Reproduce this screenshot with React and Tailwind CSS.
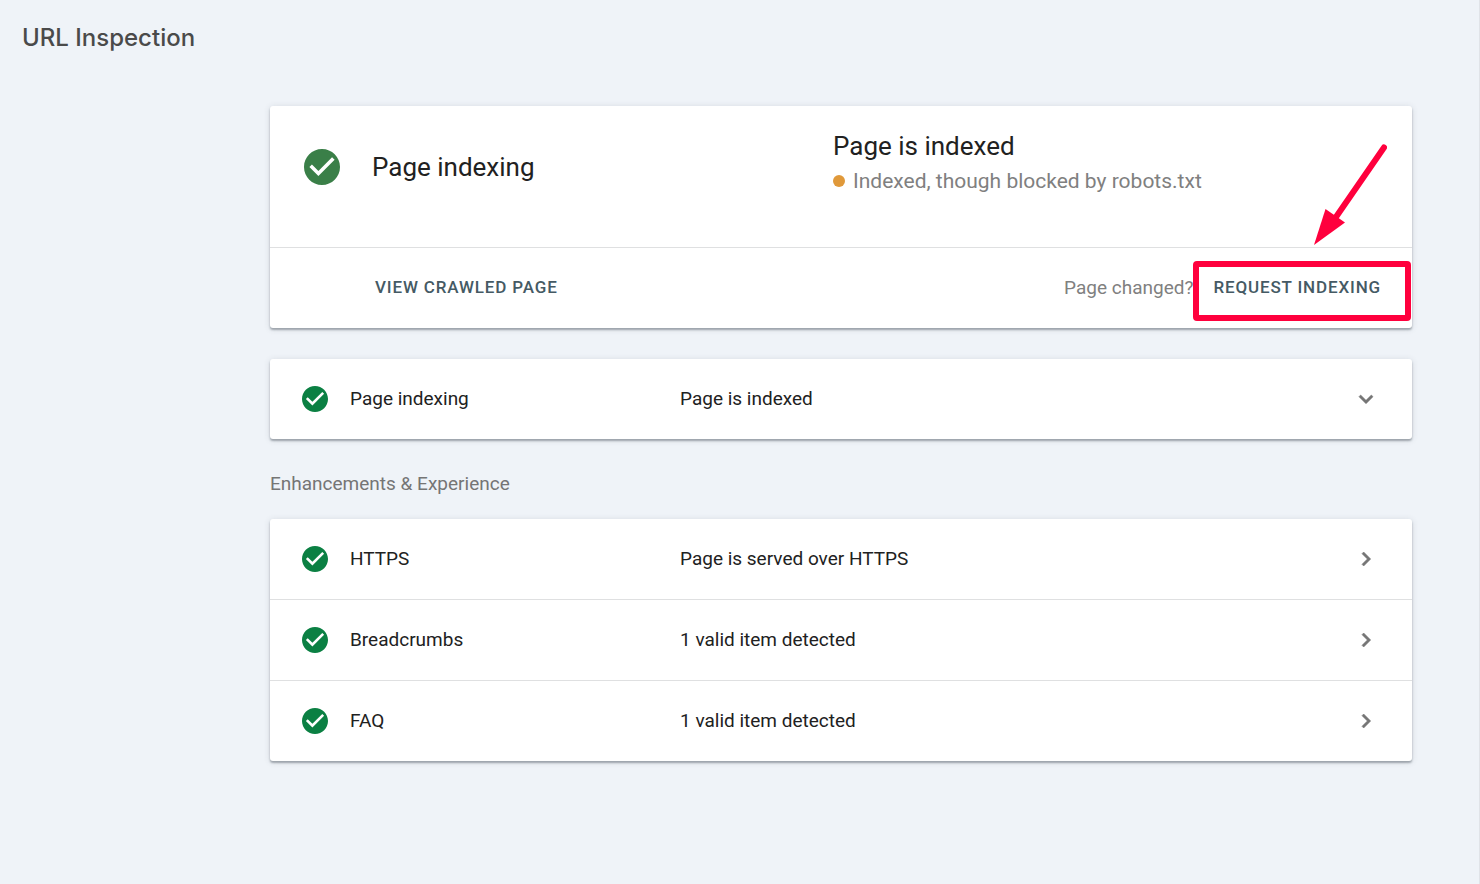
const ENHANCEMENTS = [
  { id: "https", label: "HTTPS", status: "Page is served over HTTPS" },
  { id: "breadcrumbs", label: "Breadcrumbs", status: "1 valid item detected" },
  { id: "faq", label: "FAQ", status: "1 valid item detected" },
];

function CheckIcon({ className }) {
  return (
    <svg viewBox="2 2 20 20" fill="currentColor" className={className} aria-hidden="true">
      <path d="M12 2C6.48 2 2 6.48 2 12s4.48 10 10 10 10-4.48 10-10S17.52 2 12 2zm-2 15l-5-5 1.41-1.41L10 14.17l7.59-7.59L19 8l-9 9z" />
    </svg>
  );
}

function ChevronIcon({ direction }) {
  return (
    <svg
      viewBox="0 0 24 24"
      fill="currentColor"
      stroke="currentColor"
      strokeWidth="0.5"
      className="size-7 text-[#757575]"
      aria-hidden="true"
    >
      {direction === "down" ? (
        <path d="M7.41 8.59L12 13.17l4.59-4.58L18 10l-6 6-6-6 1.41-1.41z" />
      ) : (
        <path d="M8.59 16.59L13.17 12 8.59 7.41 10 6l6 6-6 6-1.41-1.41z" />
      )}
    </svg>
  );
}

function Card({ children }) {
  return (
    <section className="rounded-[3px] bg-white shadow-[0_2px_2px_rgba(60,70,80,0.4),0_1px_6px_rgba(60,70,80,0.16)]">
      {children}
    </section>
  );
}

function StatusRow({ label, status, direction = "right" }) {
  return (
    <button type="button" className="flex h-20 w-full items-center px-8 text-left text-[19px] leading-6 text-[#212121]">
      <CheckIcon className="mr-[22px] size-[26px] shrink-0 text-[#0b8043]" />
      <span className="w-[330px] shrink-0">{label}</span>
      <span className="flex-1">{status}</span>
      <ChevronIcon direction={direction} />
    </button>
  );
}

// Red box around the button, with an arrow that points to it.
function Callout({ children }) {
  return (
    <div className="relative">
      {children}
      <span className="pointer-events-none absolute inset-0 rounded-sm border-6 border-[#ff003d]" />
      <svg
        viewBox="0 0 74 102"
        className="pointer-events-none absolute right-6 bottom-full mb-4 h-[102px] w-[74px] text-[#ff003d]"
        aria-hidden="true"
      >
        <path d="M71 4.500L23 74" stroke="currentColor" strokeWidth="6" strokeLinecap="round" />
        <path d="M1 102L12.500 66L32 79.500Z" fill="currentColor" />
      </svg>
    </div>
  );
}

export default function App() {
  return (
    <div className="min-h-screen border-r border-[#e0e3e8] bg-[#eff3f8] font-[Roboto,sans-serif]">
      <header className="px-[22px] pt-[22px]">
        <h1 className="font-[Inter,sans-serif] text-2xl leading-8 font-medium text-[#4a4a4a]">URL Inspection</h1>
      </header>

      <main className="mt-[52px] mr-[67px] ml-[270px] pb-12">
        <Card>
          <div className="flex h-[141px] items-start pt-6 pl-[34px]">
            <CheckIcon className="mt-[19px] mr-8 size-9 shrink-0 text-[#3a7f48]" />
            <h2 className="mt-[19px] w-[461px] shrink-0 text-[26px] leading-9 text-[#212121]">Page indexing</h2>
            <div>
              <p className="text-[26px] leading-8 text-[#212121]">Page is indexed</p>
              <p className="mt-[3px] flex items-center gap-2 text-[21px] leading-8 text-[#808080]">
                <span className="size-3 rounded-full bg-[#e0993a]" />
                Indexed, though blocked by robots.txt
              </p>
            </div>
          </div>
          <div className="flex h-[81px] items-center border-t border-[#dfe0e1] pl-[105px]">
            <button type="button" className="text-[17px] font-medium tracking-wider text-[#455a64]">
              VIEW CRAWLED PAGE
            </button>
            <div className="mr-px ml-auto flex items-center pt-1.5">
              <span className="pb-1.5 text-[19px] leading-6 text-[#808080]">Page changed?</span>
              <Callout>
                <button type="button" className="h-[60px] pr-[30px] pb-1.5 pl-5 text-[17px] font-medium tracking-wider text-[#455a64]">
                  REQUEST INDEXING
                </button>
              </Callout>
            </div>
          </div>
        </Card>

        <div className="mt-[31px]">
          <Card>
            <StatusRow label="Page indexing" status="Page is indexed" direction="down" />
          </Card>
        </div>

        <h2 className="mt-[33px] mb-[23px] text-[19px] leading-6 text-[#757575]">Enhancements &amp; Experience</h2>

        <Card>
          <ul className="divide-y divide-[#dfe0e1]">
            {ENHANCEMENTS.map((item) => (
              <li key={item.id}>
                <StatusRow label={item.label} status={item.status} />
              </li>
            ))}
          </ul>
        </Card>
      </main>
    </div>
  );
}
